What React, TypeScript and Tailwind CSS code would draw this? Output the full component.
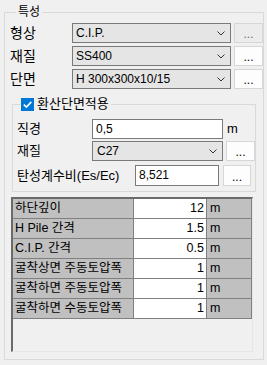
import React from "react";

function Chevron() {
  return (
    <svg width="8" height="5" viewBox="0 0 8 5" className="shrink-0">
      <path d="M0.5 0.5 L4 4 L7.5 0.5" fill="none" stroke="#333" strokeWidth="1" />
    </svg>
  );
}

function Combo({ value, className }: { value: string; className: string }) {
  return (
    <div className={className}>
      <span className="flex-1 text-[12px] leading-[14px] text-black">{value}</span>
      <Chevron />
    </div>
  );
}

function Dots({ disabled }: { disabled?: boolean }) {
  return disabled ? (
    <div className="w-[29px] h-[20px] ml-[3px] border border-[#d6d6d6] bg-[#ececec] flex items-end justify-center pb-[2px] text-[12px] leading-[12px] text-[#6d6d6d]">
      ...
    </div>
  ) : (
    <div className="w-[29px] h-[20px] ml-[3px] border border-[#d6d6d6] bg-[#fdfdfd] flex items-end justify-center pb-[2px] text-[12px] leading-[12px] text-black">
      ...
    </div>
  );
}

const rows: [string, string][] = [
  ["하단깊이", "12"],
  ["H Pile 간격", "1.5"],
  ["C.I.P. 간격", "0.5"],
  ["굴착상면 주동토압폭", "1"],
  ["굴착하면 주동토압폭", "1"],
  ["굴착하면 수동토압폭", "1"],
];

export default function App() {
  return (
    <div className="w-[267px] h-[365px] bg-[#f0f0f0] pt-[4px] pl-[4px] font-['Liberation_Sans','Noto_Sans_CJK_KR',sans-serif] text-black overflow-hidden">
      <fieldset className="w-[259px] h-[356px] border border-[#d9d9d9] pl-[5px] flex flex-col">
        <legend className="ml-[6px] px-[2px] text-[12px] leading-[16px]">특성</legend>
        <div className="flex flex-col gap-[3px] pt-[3px]">
          <div className="flex items-center h-[20px]">
            <span className="w-[62px] text-[14px] leading-[20px]">형상</span>
            <Combo
              value="C.I.P."
              className="w-[159px] h-[20px] flex items-center border border-[#7a7a7a] bg-[#e5e5e5] pl-[3px] pr-[5px]"
            />
            <Dots disabled />
          </div>
          <div className="flex items-center h-[20px]">
            <span className="w-[62px] text-[14px] leading-[20px]">재질</span>
            <Combo
              value="SS400"
              className="w-[159px] h-[20px] flex items-center border border-[#7a7a7a] bg-[#e5e5e5] pl-[3px] pr-[5px]"
            />
            <Dots />
          </div>
          <div className="flex items-center h-[20px]">
            <span className="w-[62px] text-[14px] leading-[20px]">단면</span>
            <Combo
              value="H 300x300x10/15"
              className="w-[159px] h-[20px] flex items-center border border-[#7a7a7a] bg-[#e5e5e5] pl-[3px] pr-[5px]"
            />
            <Dots />
          </div>
        </div>

        <fieldset className="mt-[6px] ml-[2px] w-[244px] border border-[#d9d9d9] pl-[4px] pb-[5px]">
          <legend className="ml-[3px] pl-[1px] pr-[2px] flex items-center h-[18px]">
            <span className="w-[13px] h-[13px] bg-[#0078d7] flex items-center justify-center">
              <svg width="11" height="11" viewBox="0 0 11 11">
                <path d="M1.8 5.6 L4.4 8.1 L9.3 2.9" fill="none" stroke="#fff" strokeWidth="1.6" />
              </svg>
            </span>
            <span className="ml-[3px] text-[13px] leading-[18px]">환산단면적용</span>
          </legend>
          <div className="flex flex-col gap-[2px] pt-[6px]">
            <div className="flex items-center h-[20px]">
              <span className="w-[75px] text-[13px] leading-[20px]">직경</span>
              <div className="w-[131px] h-[20px] border border-[#7a7a7a] bg-white pl-[3px] text-[12px] leading-[18px]">0,5</div>
              <span className="ml-[4px] text-[13px] leading-[20px]">m</span>
            </div>
            <div className="flex items-center h-[20px]">
              <span className="w-[75px] text-[13px] leading-[20px]">재질</span>
              <Combo
                value="C27"
                className="w-[131px] h-[20px] flex items-center border border-[#7a7a7a] bg-[#e5e5e5] pl-[4px] pr-[5px]"
              />
              <Dots />
            </div>
            <div className="flex items-center h-[21px] mt-[2px]">
              <span className="w-[118px] text-[13px] leading-[20px] whitespace-nowrap">탄성계수비(Es/Ec)</span>
              <div className="w-[84px] h-[21px] border border-[#7a7a7a] bg-white pl-[3px] text-[12px] leading-[19px]">8,521</div>
              <div className="w-[28px] h-[21px] ml-[4px] border border-[#d6d6d6] bg-[#fdfdfd] flex items-end justify-center pb-[2px] text-[12px] leading-[12px]">
                ...
              </div>
            </div>
          </div>
        </fieldset>

        <div className="mt-[5px] ml-[1px] w-[242px] h-[155px] border-l-2 border-t-2 border-[#6b6b6b] border-r border-b border-r-[#e6e6e6] border-b-[#e6e6e6] bg-[#f0f0f0] flex flex-col">
          {rows.map(([label, val]) => (
            <div key={label} className="flex h-[20px] border-b border-[#808080] text-[12.5px] leading-[19px]">
              <div className="w-[121px] bg-[#c0c0c0] border-r border-[#808080] pl-[2px] whitespace-nowrap">{label}</div>
              <div className="w-[73px] bg-white border-r border-[#808080] text-right pr-[2px]">{val}</div>
              <div className="w-[45px] bg-[#c0c0c0] border-r border-[#808080] pl-[3px]">m</div>
            </div>
          ))}
        </div>
      </fieldset>
    </div>
  );
}
